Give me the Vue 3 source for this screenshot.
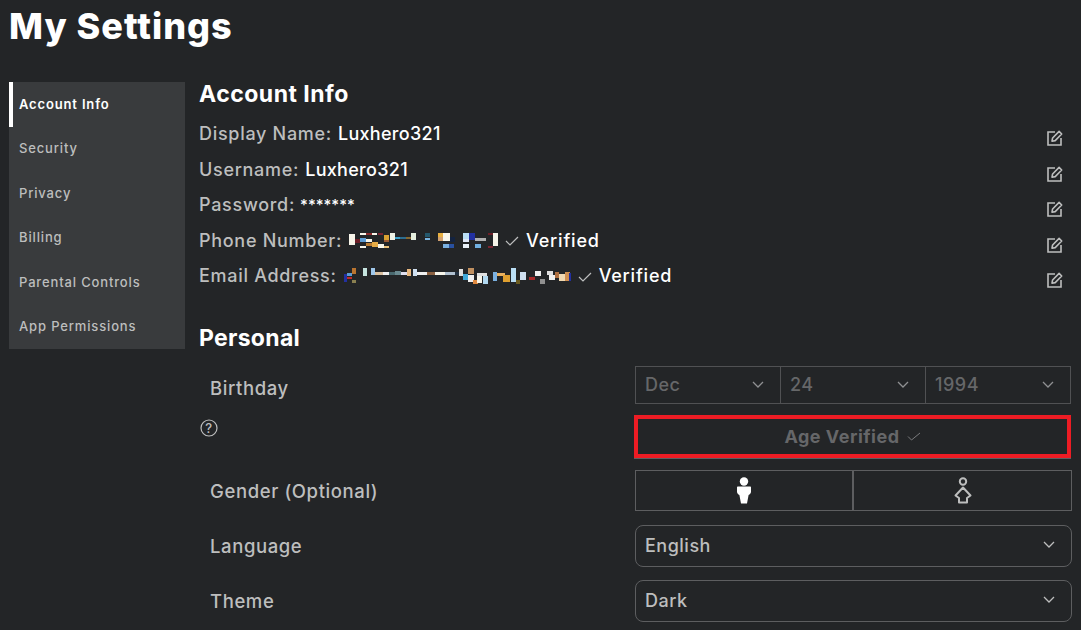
<template>
  <div class="page">
    <h1 class="title">My Settings</h1>
    <div class="layout">
      <nav class="sidebar">
        <a v-for="item in navItems" :key="item" class="nav-item" :class="{ active: item === 'Account Info' }">{{ item }}</a>
      </nav>
      <main class="content">
        <h2 class="section-title">Account Info</h2>
        <div class="info-list">
          <div v-for="row in infoRows" :key="row.label" class="info-row">
            <div class="info-text">
              <span class="info-label">{{ row.label }}:</span>
              <span v-if="row.value" class="info-value" :class="{ stars: row.label === 'Password' }">{{ row.value }}</span>
              <svg v-if="row.censor" class="censor" :width="row.censor.w" height="20" :viewBox="`0 0 ${row.censor.w} 20`">
                <rect v-for="(b, i) in row.censor.blocks" :key="i" :x="b[0]" :y="b[1]" :width="b[2]" :height="b[3]" :fill="b[4]" />
              </svg>
              <template v-if="row.verified">
                <svg class="check" width="14" height="10" viewBox="0 0 14 10" fill="none">
                  <path d="M1 5l4 4 8-8" stroke="#bdbebe" stroke-width="1.2" />
                </svg>
                <span class="info-value verified">Verified</span>
              </template>
            </div>
            <svg class="edit" width="18" height="18" viewBox="0 0 18 18" fill="none" stroke="#bdbebe" stroke-width="1.6">
              <path d="M9 3H2v13h13V9" />
              <path d="M6 12.200l.6-3.200 6.500-6.600 2.600 2.600-6.500 6.600z" stroke-linejoin="round" />
            </svg>
          </div>
        </div>

        <h2 class="section-title personal">Personal</h2>
        <div class="form-row birthday">
          <label class="form-label">Birthday</label>
          <div class="date-group">
            <div v-for="d in dates" :key="d" class="date-select">
              <span>{{ d }}</span>
              <svg class="chevron" width="12" height="7" viewBox="0 0 12 7" fill="none"><path d="M1 1l5 5 5-5" stroke="#8f9092" stroke-width="1.3" /></svg>
            </div>
          </div>
        </div>
        <div class="form-row verified-row">
          <div class="help">
            <svg width="18" height="18" viewBox="0 0 18 18" fill="none">
              <circle cx="9" cy="9" r="8" stroke="#bdbebe" stroke-width="1.2" />
              <text x="9" y="13.500" text-anchor="middle" class="help-mark">?</text>
            </svg>
          </div>
          <div class="verified-box">
            <span>Age Verified</span>
            <svg width="14" height="9" viewBox="0 0 14 9" fill="none"><path d="M1 4.500l3.500 3.500 8.500-7" stroke="#7a7b7d" stroke-width="1" /></svg>
          </div>
        </div>
        <div class="form-row gender">
          <label class="form-label">Gender (Optional)</label>
          <div class="gender-group">
            <button class="gender-btn">
              <svg width="14" height="27" viewBox="0 0 14 27">
                <circle cx="7" cy="4.500" r="4.200" fill="#fff" />
                <path d="M1 9.500h12c.6 0 1 .4 1 1V15c0 1-1.200 2.400-2.400 3L10 26.500H4l-1.600-8.500C1.200 17.400 0 16 0 15v-4.500c0-.6.400-1 1-1z" fill="#fff" />
              </svg>
            </button>
            <button class="gender-btn">
              <svg width="18" height="27" viewBox="0 0 18 27" fill="none" stroke="#bdbebe" stroke-width="2">
                <circle cx="9" cy="4.500" r="3.200" />
                <path d="M9 10.500l7.500 8-3.500 2.500v4.500H5V21l-3.500-2.500z" stroke-linejoin="round" />
              </svg>
            </button>
          </div>
        </div>
        <div class="form-row language">
          <label class="form-label">Language</label>
          <div class="select-box">
            <span>English</span>
            <svg class="chevron" width="12" height="7" viewBox="0 0 12 7" fill="none"><path d="M1 1l5 5 5-5" stroke="#bdbebe" stroke-width="1.3" /></svg>
          </div>
        </div>
        <div class="form-row theme">
          <label class="form-label">Theme</label>
          <div class="select-box">
            <span>Dark</span>
            <svg class="chevron" width="12" height="7" viewBox="0 0 12 7" fill="none"><path d="M1 1l5 5 5-5" stroke="#bdbebe" stroke-width="1.3" /></svg>
          </div>
        </div>
      </main>
    </div>
  </div>
</template>

<script setup>
const navItems = ['Account Info', 'Security', 'Privacy', 'Billing', 'Parental Controls', 'App Permissions'];

const W = '#f7f5ea';
const phoneBlocks = [
  [1, 4, 6, 11, W], [7, 9, 5, 4, '#6b1e26'], [12, 3, 6, 2, W], [18, 3, 6, 2, '#8a2a2a'], [12, 8, 6, 4, '#5b9bd5'],
  [18, 9, 6, 3, W], [24, 3, 5, 2, W], [30, 3, 5, 2, '#7a2430'], [36, 5, 5, 5, '#d9a032'], [36, 10, 5, 2, '#9b5a30'],
  [18, 13, 6, 3, '#b87a30'], [24, 12, 6, 5, '#e5ab45'], [30, 14, 6, 4, W], [36, 16, 5, 2, '#eac27a'], [12, 16, 6, 2, W],
  [42, 3, 5, 7, '#eef2e6'], [47, 7, 5, 2, '#3ba0c8'], [52, 7, 6, 2, '#2d6d90'], [58, 7, 5, 2, '#8a6a30'], [63, 3, 5, 7, '#e4eede'],
  [77, 3, 5, 4, '#24586c'], [77, 8, 5, 2, '#7ab5e0'],
  [90, 3, 5, 4, '#e8b040'], [95, 3, 7, 8, W], [90, 7, 5, 4, '#d0a070'], [102, 7, 5, 5, '#14233f'], [95, 14, 6, 4, '#7ab0e0'], [101, 14, 5, 4, '#2850a0'],
  [115, 3, 6, 6, '#b9def5'], [115, 9, 6, 3, '#e0e8f8'], [121, 3, 6, 7, '#2230a0'], [127, 8, 6, 3, '#b0b0b0'], [115, 14, 6, 4, '#e8f0f8'], [127, 14, 6, 4, '#70b0e0'],
  [133, 8, 5, 3, '#b0b0b0'], [140, 3, 5, 2, '#6b1e26'], [145, 3, 5, 13, W], [140, 16, 5, 2, '#7a2430']
];
const emailBlocks = [
  [1, 8, 3, 8, '#2230a0'], [4, 7, 5, 3, '#5b9bd5'], [4, 11, 5, 2, '#c02a2a'], [9, 2, 4, 6, '#b9742f'], [9, 14, 4, 3, '#8a8050'],
  [20, 2, 4, 8, '#c6e4df'], [28, 2, 4, 7, '#9fc7ea'], [32, 6, 8, 3, '#d9c0a0'], [40, 6, 6, 3, '#f0f0f0'], [46, 6, 6, 3, '#4a6a70'],
  [52, 5, 6, 4, '#6a8a90'], [58, 6, 6, 3, '#e0e0f0'], [64, 3, 4, 7, '#e8b880'], [70, 3, 4, 7, '#cfe0f0'], [74, 6, 10, 3, '#f0f0f0'], [84, 6, 8, 3, '#8a6040'],
  [92, 6, 10, 3, '#f7f5ea'], [102, 6, 10, 3, '#b0c0d0'], [112, 6, 8, 3, '#223040'], [116, 3, 4, 7, '#e0e0e0'],
  [120, 8, 5, 6, '#40a8d8'], [125, 2, 6, 6, '#c09060'], [125, 9, 6, 7, '#f0f0f0'], [130, 14, 5, 4, '#e08a40'], [134, 7, 10, 3, '#e0e0e0'],
  [134, 10, 5, 7, '#f7f5ea'], [140, 10, 5, 8, '#b0d8f0'], [150, 6, 4, 9, '#7ab0e0'], [154, 7, 8, 3, '#e8b060'], [160, 9, 7, 7, '#e0a030'],
  [168, 2, 5, 14, '#b9def5'], [173, 14, 4, 4, '#6a5a20'], [177, 6, 6, 8, '#d0e0f0'],
  [186, 11, 6, 3, '#a82a2a'], [192, 5, 6, 5, '#f0f0f0'], [197, 13, 5, 5, '#909090'], [204, 5, 6, 4, '#e0e0e0'], [206, 9, 6, 5, '#f0f0f0'], [212, 6, 4, 6, '#b07040'],
  [216, 8, 6, 7, '#f0d8b0'], [222, 6, 5, 9, '#d09050'], [226, 7, 2, 8, '#2230a0']
];

const infoRows = [
  { label: 'Display Name', value: 'Luxhero321' },
  { label: 'Username', value: 'Luxhero321' },
  { label: 'Password', value: '*******' },
  { label: 'Phone Number', censor: { w: 150, blocks: phoneBlocks }, verified: true },
  { label: 'Email Address', censor: { w: 228, blocks: emailBlocks }, verified: true }
];

const dates = ['Dec', '24', '1994'];
</script>

<style>
body {
  background: #232527;
}
</style>

<style scoped>
.page {
  width: 1081px;
  height: 630px;
  overflow: hidden;
  background: #232527;
  color: #bdbebe;
  font-family: Inter, "Noto Sans", sans-serif;
  font-weight: 500;
}

.title {
  margin: 0;
  height: 82px;
  padding: 5px 0 0 9px;
  box-sizing: border-box;
  font-size: 36px;
  line-height: 42px;
  font-weight: 800;
  letter-spacing: 1px;
  color: #fff;
}

.layout {
  display: flex;
  padding-left: 9px;
}

.sidebar {
  width: 176px;
  height: 267px;
  display: flex;
  flex-direction: column;
  background: #393b3d;
  flex-shrink: 0;
}

.nav-item {
  height: 44.5px;
  display: flex;
  align-items: center;
  padding: 0 0 1px 10px;
  font-size: 13px;
  letter-spacing: 0.85px;
  box-sizing: border-box;
}

.nav-item.active {
  color: #fff;
  border-left: 4px solid #fff;
  padding-left: 6px;
  font-weight: 600;
}

.content {
  width: 873px;
  margin-left: 14px;
}

.section-title {
  margin: 0;
  height: 34px;
  font-size: 23px;
  line-height: 24px;
  font-weight: 700;
  letter-spacing: 0.5px;
  color: #fff;
}

.section-title.personal {
  margin-top: 32px;
  height: 40.5px;
  letter-spacing: 0.3px;
}

.info-row {
  height: 35.5px;
  display: flex;
  align-items: center;
  justify-content: space-between;
  font-size: 18px;
}

.info-text {
  display: flex;
  align-items: center;
  gap: 6px;
}

.info-label {
  letter-spacing: 0.7px;
}

.info-value {
  color: #fff;
  letter-spacing: 0.3px;
}

.verified {
  letter-spacing: 0.8px;
}

.stars {
  margin-left: -1px;
  font-size: 15px;
  letter-spacing: 0;
}

.check {
  margin: 2px 1px 0 1px;
}

.edit {
  margin: 9px 8px 0 0;
}

.form-row {
  display: flex;
  justify-content: space-between;
  font-size: 18px;
  letter-spacing: 0.5px;
}

.form-label {
  padding-left: 11px;
  font-size: 18.5px;
  letter-spacing: 0.6px;
  line-height: 22px;
}

.birthday {
  height: 38px;
}

.birthday .form-label {
  padding-top: 11px;
}

.date-group {
  width: 436px;
  margin-right: 1px;
  display: flex;
  border: 1px solid #505153;
  box-sizing: border-box;
}

.date-select {
  flex: 1;
  display: flex;
  align-items: center;
  justify-content: space-between;
  padding: 0 16px 1px 9px;
  color: #666769;
  border-left: 1px solid #505153;
}

.date-select:first-child {
  border-left: 0;
}

.date-select .chevron {
  margin-bottom: 1px;
}

.verified-row {
  margin-top: 11px;
  height: 43px;
}

.help {
  padding: 4px 0 0 1px;
}

.help-mark {
  font-size: 13px;
  fill: #bdbebe;
  font-family: Inter, sans-serif;
}

.verified-box {
  width: 437px;
  height: 43px;
  margin-right: 1px;
  box-sizing: border-box;
  border: 4px solid #ed1c24;
  box-shadow: 0 1px 0 #5d5e60;
  display: flex;
  align-items: center;
  justify-content: center;
  gap: 7px;
  color: #666769;
  font-weight: 700;
}

.gender {
  margin-top: 12px;
  height: 41px;
  align-items: center;
}

.gender-group {
  width: 437px;
  height: 41px;
  display: flex;
  box-sizing: border-box;
  border: 1px solid #5d5e60;
}

.gender-btn {
  flex: 1;
  display: flex;
  align-items: center;
  justify-content: center;
  padding: 0;
  background: none;
  border: 0;
  border-left: 2px solid #5d5e60;
}

.gender-btn:first-child {
  flex: 0 0 216px;
  border-left: 0;
}

.language,
.theme {
  height: 42px;
  align-items: center;
}

.language {
  margin-top: 14px;
}

.theme {
  margin-top: 13px;
}

.select-box {
  width: 437px;
  height: 42px;
  display: flex;
  align-items: center;
  justify-content: space-between;
  padding: 0 16px 2px 9px;
  box-sizing: border-box;
  border: 1px solid #5d5e60;
  border-radius: 8px;
  color: #bdbebe;
}

.select-box .chevron {
  margin-bottom: 2px;
}
</style>
